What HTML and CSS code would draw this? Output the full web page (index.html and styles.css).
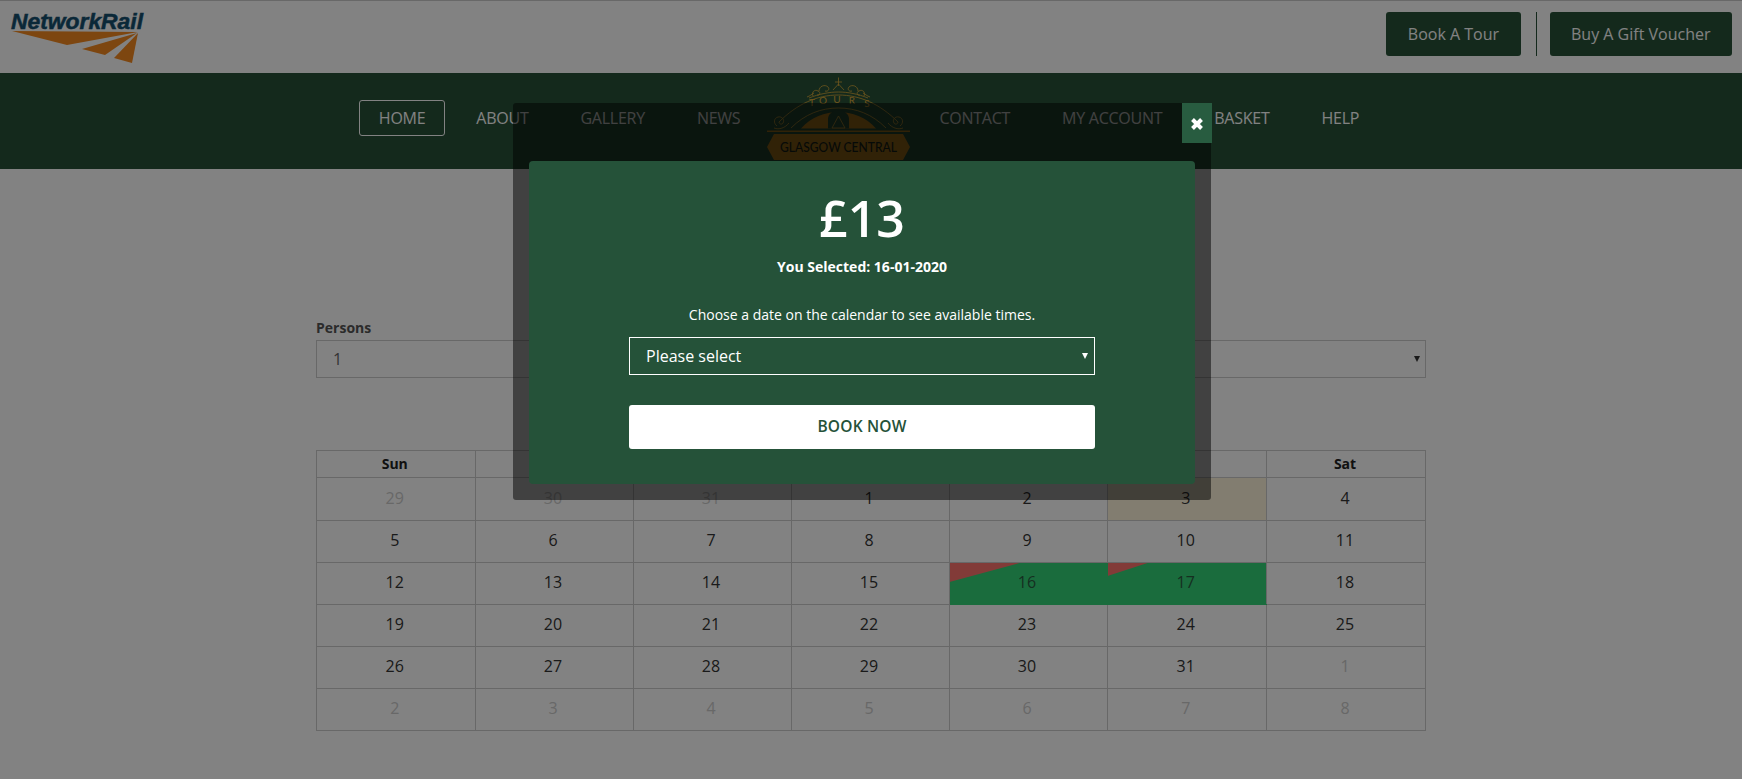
FILE: index.html
```html
<!DOCTYPE html>
<html lang="en">
<head>
<meta charset="utf-8">
<title>Glasgow Central Tours</title>
<link rel="stylesheet" href="styles.css">
</head>
<body>
<header class="topbar">
  <svg class="nr-logo" width="150" height="66" viewBox="0 0 150 66">
    <text class="nr-word" x="11" y="28" textLength="132" lengthAdjust="spacingAndGlyphs">NetworkRail</text>
    <polygon class="nr-flash" points="12,30 138,31 67,44"/>
    <polygon class="nr-flash" points="82,48 137,32 105,54"/>
    <polygon class="nr-flash" points="114,57 138,32 132,62"/>
  </svg>
  <div class="top-actions">
    <a class="top-btn">Book A Tour</a>
    <span class="top-sep"></span>
    <a class="top-btn">Buy A Gift Voucher</a>
  </div>
</header>

<nav class="mainnav">
  <a class="nav-item nav-active">HOME</a>
  <a class="nav-item">ABOUT</a>
  <a class="nav-item">GALLERY</a>
  <a class="nav-item">NEWS</a>
  <svg class="tours-logo" width="143" height="90" viewBox="0 0 143 90">
    <g class="tl-line">
      <path d="M71.500 1.500V10"/>
      <path d="M68 6h7"/>
      <path d="M66 14l5.500-6 5.500 6"/>
      <path d="M40 21c3-1 5-3 7-4M103 21c-3-1-5-3-7-4"/>
      <path d="M46 20c-2-4 2-7 5-5 3 1 2 5-1 4M97 20c2-4-2-7-5-5-3 1-2 5 1 4"/>
      <path d="M52 15c0-5 6-7 9-4 2 2 0 5-3 4M91 15c0-5-6-7-9-4-2 2 0 5 3 4"/>
      <path d="M42 22C52 18 62 16 71.500 16S91 18 101 22"/>
      <path d="M12 46C30 28 50 19 71.500 19S113 28 131 46"/>
      <path d="M24 52C38 38 54 32 71.500 32S105 38 119 52"/>
      <path d="M10 50c-4-3-3-8 1-9 4-1 7 3 5 6-1 2-4 1-4-1M133 50c4-3 3-8-1-9-4-1-7 3-5 6 1 2 4 1 4-1"/>
      <path d="M7 52c5 2 11 0 15-5M136 52c-5 2-11 0-15-5"/>
    </g>
    <text class="tl-tours" x="45 56 70 85 100" y="30 28 27 28 31" text-anchor="middle">TOURS</text>
    <path class="tl-fill" d="M34 52.500C44 41 58 36 71.500 36S99 41 109 52.500z"/>
    <path class="tl-dark" d="M61 52.500V43c0-5 5-9 10.500-9S82 38 82 43v9.500z"/>
    <path class="tl-line" d="M65 52l6.500-12 6.500 12z"/>
    <rect class="tl-band" x="0" y="54.500" width="143" height="1.500"/>
    <polygon class="tl-fill" points="0,71 7,58 136,58 143,71 136,84 7,84"/>
    <text class="tl-plate" x="71.500" y="76" text-anchor="middle" textLength="117" lengthAdjust="spacingAndGlyphs">GLASGOW CENTRAL</text>
  </svg>
  <a class="nav-item">CONTACT</a>
  <a class="nav-item">MY ACCOUNT</a>
  <a class="nav-item">BASKET</a>
  <a class="nav-item">HELP</a>
</nav>

<main class="booking">
  <div class="filters">
    <div class="field">
      <label class="field-label">Persons</label>
      <div class="select-wrap">
        <select class="page-select"><option>1</option></select>
      </div>
    </div>
    <div class="field">
      <div class="select-wrap">
        <select class="page-select"><option></option></select>
      </div>
    </div>
  </div>

  <table class="calendar">
    <thead>
      <tr><th class="col-first">Sun</th><th>Mon</th><th>Tue</th><th>Wed</th><th>Thu</th><th class="col-wide">Fri</th><th class="col-last">Sat</th></tr>
    </thead>
    <tbody>
      <tr class="row-first"><td class="muted">29</td><td class="muted">30</td><td class="muted">31</td><td>1</td><td>2</td><td class="today">3</td><td>4</td></tr>
      <tr><td>5</td><td>6</td><td>7</td><td>8</td><td>9</td><td>10</td><td>11</td></tr>
      <tr><td>12</td><td>13</td><td>14</td><td>15</td><td class="avail"><span class="corner corner-a"></span>16</td><td class="avail avail-end"><span class="corner corner-b"></span>17</td><td>18</td></tr>
      <tr><td>19</td><td>20</td><td>21</td><td>22</td><td>23</td><td>24</td><td>25</td></tr>
      <tr><td>26</td><td>27</td><td>28</td><td>29</td><td>30</td><td>31</td><td class="muted">1</td></tr>
      <tr><td class="muted">2</td><td class="muted">3</td><td class="muted">4</td><td class="muted">5</td><td class="muted">6</td><td class="muted">7</td><td class="muted">8</td></tr>
    </tbody>
  </table>
</main>

<div class="overlay"></div>

<section class="modal">
  <button class="modal-close" aria-label="Close">
    <svg width="14" height="14" viewBox="0 0 14 14"><path d="M2.500 2.500l9 9M11.500 2.500l-9 9"/></svg>
  </button>
  <div class="modal-card">
    <div class="price">£13</div>
    <p class="selected">You Selected: 16-01-2020</p>
    <p class="hint">Choose a date on the calendar to see available times.</p>
    <div class="select-wrap select-wrap-light">
      <select class="modal-select"><option>Please select</option></select>
    </div>
    <button class="book-now">BOOK NOW</button>
  </div>
</section>
</body>
</html>
```

FILE: styles.css
```css
* { box-sizing: border-box; }

html, body {
  margin: 0;
  height: 100%;
  overflow: hidden;
}

body {
  background: #fff;
  font-family: "Open Sans", "Noto Sans", sans-serif;
  color: #444;
}

/* Top bar */
.topbar {
  height: 73px;
  border-top: 1px solid #ccc;
  display: flex;
  justify-content: space-between;
  align-items: flex-start;
  padding-right: 10px;
}

.nr-logo { display: block; }

.nr-word {
  font-family: "Liberation Sans", sans-serif;
  font-weight: 700;
  font-style: italic;
  font-size: 22px;
  fill: #15506f;
  stroke: #15506f;
  stroke-width: .5px;
}

.nr-flash { fill: #f58a20; }

.top-actions {
  display: flex;
  align-items: stretch;
  margin-top: 11px;
  height: 44px;
}

.top-btn {
  display: flex;
  align-items: center;
  padding: 0 21.500px;
  background: #285238;
  color: #fff;
  border-radius: 3px;
  font-size: 16px;
}

.top-sep {
  width: 1px;
  margin: 0 13px 0 15px;
  background: #285238;
}

/* Main navigation */
.mainnav {
  height: 96px;
  background: #285238;
  display: flex;
  justify-content: center;
  align-items: flex-start;
  gap: 10px;
  padding: 27px 3px 0 0;
}

.nav-item {
  height: 36px;
  display: flex;
  align-items: center;
  padding: 0 20px;
  color: #fff;
  font-size: 16px;
  letter-spacing: -.25px;
  border: 1px solid transparent;
  border-radius: 3px;
}

.nav-active { border-color: #fff; padding: 0 19px; }

.tours-logo {
  margin: -24px -2px 0 -4px;
  overflow: visible;
  flex: none;
}

.tl-line { fill: none; stroke: #d9a838; stroke-width: .8; }
.tl-fill { fill: #c0841f; }
.tl-dark { fill: #285238; }
.tl-band { fill: #c0841f; }

.tl-tours {
  font-family: "Lato", sans-serif;
  font-size: 10px;
  fill: #d9a838;
}

.tl-plate {
  font-family: "Lato", sans-serif;
  font-size: 13.500px;
  font-weight: 500;
  fill: #1a2a20;
}

/* Booking form */
.booking {
  width: 1110px;
  margin: 0 auto;
  padding-top: 149px;
}

.filters {
  display: grid;
  grid-template-columns: 1fr 1fr;
  gap: 20px;
  align-items: end;
}

.field-label {
  display: block;
  font-size: 14px;
  font-weight: 700;
  line-height: 20px;
  margin-bottom: 2px;
  color: #555;
}

.select-wrap { position: relative; }

.select-wrap::after {
  content: "";
  position: absolute;
  right: 6px;
  top: 50%;
  margin-top: -3px;
  border-left: 3.500px solid transparent;
  border-right: 3.500px solid transparent;
  border-top: 6px solid #333;
}

.select-wrap-light { width: 466px; }
.select-wrap-light::after { border-top-color: #fff; right: 7.500px; }

.page-select,
.modal-select {
  display: block;
  width: 100%;
  height: 38px;
  appearance: none;
  font-family: inherit;
  font-size: 16px;
  padding: 0 16px;
  border-radius: 0;
}

.page-select {
  background: #fff;
  border: 1px solid #ccc;
  color: #666;
}

/* Calendar */
.calendar {
  width: 1110px;
  table-layout: fixed;
  border-collapse: collapse;
  margin-top: 72px;
  font-size: 16px;
}

.calendar th,
.calendar td {
  border: 1px solid #ccc;
  text-align: center;
  padding: 0 2px 4px 0;
}

.calendar th {
  width: 158px;
  height: 27px;
  font-size: 14px;
  font-weight: 700;
  color: #222;
  padding-bottom: 2px;
}

.calendar .col-first { width: 158.500px; }
.calendar .col-wide { width: 159.500px; }
.calendar .col-last { width: 159px; }

.calendar td {
  height: 42px;
  color: #333;
  position: relative;
}

.calendar .row-first td { height: 43px; padding-bottom: 2px; }

.calendar .muted { color: #ccc; }
.calendar .today { background: #fff6dc; }
.calendar .avail {
  background: #33d478;
  border-color: #33d478;
  color: #2a5c40;
}

.calendar .avail-end { border-right-color: #ccc; }

.corner {
  position: absolute;
  left: 0;
  top: 0;
  background: #ff756e;
}

.corner-a { width: 70px; height: 19px; clip-path: polygon(0 0, 100% 0, 0 100%); }
.corner-b { width: 40px; height: 13px; clip-path: polygon(0 0, 100% 0, 0 100%); }

/* Overlay + modal */
.overlay {
  position: fixed;
  inset: 0;
  background: rgba(0, 0, 0, .49);
}

.modal {
  position: fixed;
  left: 513px;
  top: 103px;
  width: 698px;
  padding: 58px 16px 16px;
  background: rgba(0, 0, 0, .5);
  border-radius: 3px;
}

.modal-close {
  position: absolute;
  top: 0;
  right: -1px;
  width: 30px;
  height: 40px;
  padding: 1px 0 0;
  border: 0;
  background: #285c40;
  display: flex;
  align-items: center;
  justify-content: center;
}

.modal-close path {
  fill: none;
  stroke: #fff;
  stroke-width: 4;
}

.modal-card {
  background: #255239;
  border-radius: 4px;
  color: #fff;
  padding: 28px 0 35px;
  display: flex;
  flex-direction: column;
  align-items: center;
}

.price {
  font-size: 50px;
  font-weight: 600;
  line-height: 58px;
}

.selected {
  margin: 10px 0 0;
  font-size: 14px;
  font-weight: 700;
  line-height: 20px;
}

.hint {
  margin: 28px 0 12px;
  font-size: 14px;
  line-height: 20px;
}

.modal-select {
  background: #255239;
  border: 1px solid #fff;
  color: #fff;
}

.book-now {
  width: 466px;
  height: 44px;
  margin-top: 30px;
  padding: 0 0 2px;
  border: 0;
  border-radius: 3px;
  background: #fff;
  color: #255239;
  font-family: inherit;
  font-size: 15.500px;
  font-weight: 600;
  letter-spacing: .2px;
}
```
